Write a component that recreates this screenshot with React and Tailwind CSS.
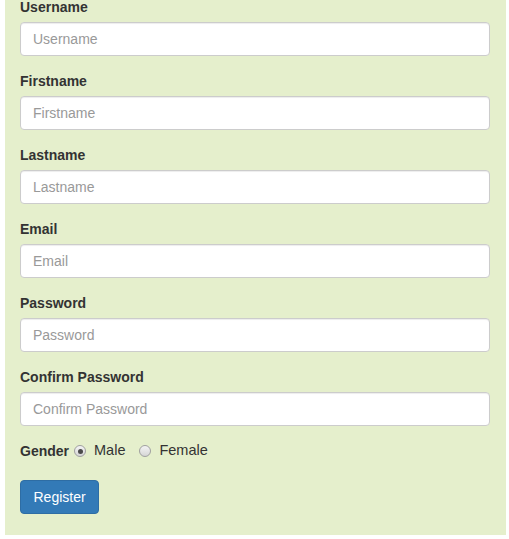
import { useState } from 'react';

const fields = [
    { name: 'username', label: 'Username', type: 'text' },
    { name: 'firstname', label: 'Firstname', type: 'text' },
    { name: 'lastname', label: 'Lastname', type: 'text' },
    { name: 'email', label: 'Email', type: 'email' },
    { name: 'password', label: 'Password', type: 'password' },
    { name: 'confirm', label: 'Confirm Password', type: 'password' },
];

const Radio = ({ checked, onChange, label, className }) => (
    <label className={`flex items-center cursor-pointer ${className}`}>
        <input type="radio" name="gender" checked={checked} onChange={onChange} className="sr-only" />
        <span className="flex items-center justify-center w-[12px] h-[12px] rounded-full border border-[#a0a0a0] bg-gradient-to-b from-[#f4f4f4] to-[#d6d6d6]">
            {checked && <span className="w-[5px] h-[5px] rounded-full bg-[#4a4a4a]" />}
        </span>
        <span className="ml-[8px] text-[14.5px]">{label}</span>
    </label>
);

const App = () => {
    const [gender, setGender] = useState('male');

    return (
        <div className="min-h-screen bg-white pl-[5px] pr-[3px] font-['Liberation_Sans',Arial,sans-serif] text-[14px] text-[#333]">
            <form className="bg-[#e5efcc] pl-[15px] pr-[16px] pb-[20px] h-[535px] overflow-hidden" onSubmit={e => e.preventDefault()}>
                <div className="-mt-[3px]">
                    {fields.map(f => (
                        <div key={f.name} className="mb-[15px]">
                            <label htmlFor={f.name} className="block font-bold leading-[20px] mb-[5px]">{f.label}</label>
                            <input
                                id={f.name}
                                type={f.type}
                                placeholder={f.label}
                                className="block w-full h-[34px] px-[12px] py-[6px] bg-white border border-[#ccc] rounded-[4px] shadow-[inset_0_1px_1px_rgba(0,0,0,0.075)] text-[14px] text-[#555] placeholder:text-[#999] outline-none"
                            />
                        </div>
                    ))}

                    <div className="flex items-center h-[20px] mt-[1px] mb-[19px]">
                        <span className="font-bold">Gender</span>
                        <Radio checked={gender === 'male'} onChange={() => setGender('male')} label="Male" className="ml-[5px]" />
                        <Radio checked={gender === 'female'} onChange={() => setGender('female')} label="Female" className="ml-[14px]" />
                    </div>

                    <button
                        type="submit"
                        className="h-[34px] px-[12.5px] bg-[#337ab7] border border-[#2e6da4] rounded-[4px] text-white text-[14px]"
                    >
                        Register
                    </button>
                </div>
            </form>
        </div>
    );
};

export default App;
